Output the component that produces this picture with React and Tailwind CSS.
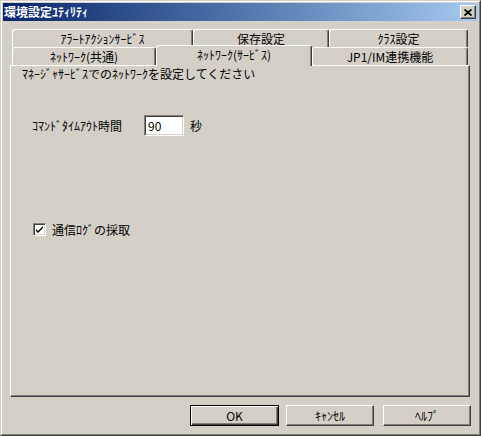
import React from "react";

const raised =
  "border-t border-l border-r border-b border-t-white border-l-white border-r-[#404040] border-b-[#404040] shadow-[inset_-1px_-1px_#808080]";

function Tab({ label, className }) {
  return (
    <div
      className={`flex items-center justify-center h-[18px] border-t border-l border-r border-t-white border-l-white border-r-[#404040] shadow-[inset_-1px_0_#808080] rounded-t-[3px] bg-[#d4d0c8] text-[12px] leading-none ${className}`}
    >
      {label}
    </div>
  );
}

function Button({ label, className, primary }) {
  return (
    <div
      className={`flex items-center justify-center h-[21px] text-[12px] leading-none ${
        primary
          ? "border border-black shadow-[inset_1px_1px_#fff,inset_-1px_-1px_#404040,inset_-2px_-2px_#808080]"
          : raised
      } ${className}`}
    >
      {label}
    </div>
  );
}

export default function App() {
  return (
    <div className="w-[481px] h-[436px] bg-[#d4d0c8] text-black font-['Noto_Sans_CJK_JP',sans-serif] border border-t-[#d4d0c8] border-l-[#d4d0c8] border-r-[#404040] border-b-[#404040]">
      <div className="h-full flex flex-col border border-t-white border-l-white border-r-[#808080] border-b-[#808080] p-px">
        {/* title bar */}
        <div className="h-[18px] flex items-center justify-between pl-[1px] pr-[2px] bg-gradient-to-r from-[#0a246a] to-[#a6caf0]">
          <span className="text-white text-[12px] font-bold leading-none">環境設定ﾕﾃｨﾘﾃｨ</span>
          <div className={`w-[16px] h-[14px] flex items-center justify-center bg-[#d4d0c8] ${raised}`}>
            <svg width="8" height="7" viewBox="0 0 8 7">
              <path d="M0.5 0.5 L7.5 6.5 M7.5 0.5 L0.5 6.5" stroke="#000" strokeWidth="1.8" />
            </svg>
          </div>
        </div>

        {/* tabs */}
        <div className="mt-[8px] ml-[9px] w-[456px] flex">
          <Tab label="ｱﾗｰﾄｱｸｼｮﾝｻｰﾋﾞｽ" className="w-[181px]" />
          <Tab label="保存設定" className="w-[136px]" />
          <Tab label="ｸﾗｽ設定" className="w-[139px]" />
        </div>
        <div className="-mt-[2px] ml-[9px] w-[456px] h-[20px] flex items-start">
          <Tab label="ﾈｯﾄﾜｰｸ(共通)" className="w-[144px] mt-[2px]" />
          <Tab label="ﾈｯﾄﾜｰｸ(ｻｰﾋﾞｽ)" className="w-[156px] !h-[21px] relative z-10 pb-[3px]" />
          <Tab label="JP1/IM連携機能" className="w-[156px] mt-[2px]" />
        </div>

        {/* panel */}
        <div className="ml-[7px] w-[460px] h-[332px] flex flex-col border-t border-l border-r border-b border-t-white border-l-white border-r-[#404040] border-b-[#404040] shadow-[inset_-1px_-1px_#808080] pt-[1px] text-[12px]">
          <div className="ml-[11px] h-[14px] leading-[14px]">ﾏﾈｰｼﾞｬｻｰﾋﾞｽでのﾈｯﾄﾜｰｸを設定してください</div>
          <div className="mt-[34px] ml-[21px] h-[21px] flex items-center">
            <span className="w-[112px] leading-none">ｺﾏﾝﾄﾞﾀｲﾑｱｳﾄ時間</span>
            <div className="w-[40px] h-[21px] bg-white border border-t-[#808080] border-l-[#808080] border-r-white border-b-white shadow-[inset_1px_1px_#404040,inset_-1px_-1px_#d4d0c8] flex items-center pl-[3px] leading-none">
              90
            </div>
            <span className="ml-[6px] leading-none">秒</span>
          </div>
          <div className="mt-[87px] ml-[22px] h-[13px] flex items-center">
            <div className="w-[13px] h-[13px] bg-white border border-t-[#808080] border-l-[#808080] border-r-white border-b-white shadow-[inset_1px_1px_#404040,inset_-1px_-1px_#d4d0c8] flex items-center justify-center">
              <svg width="7" height="7" viewBox="0 0 7 7">
                <path d="M0 3 L0 5 L2 7 L7 2 L7 0 L2 5 Z" fill="#000" />
              </svg>
            </div>
            <span className="ml-[6px] leading-none">通信ﾛｸﾞの採取</span>
          </div>
        </div>

        {/* buttons */}
        <div className="mt-[8px] ml-[187px] flex">
          <Button label="OK" primary className="w-[89px] mr-[7px]" />
          <Button label="ｷｬﾝｾﾙ" className="w-[88px] mr-[9px]" />
          <Button label="ﾍﾙﾌﾟ" className="w-[88px]" />
        </div>
      </div>
    </div>
  );
}
